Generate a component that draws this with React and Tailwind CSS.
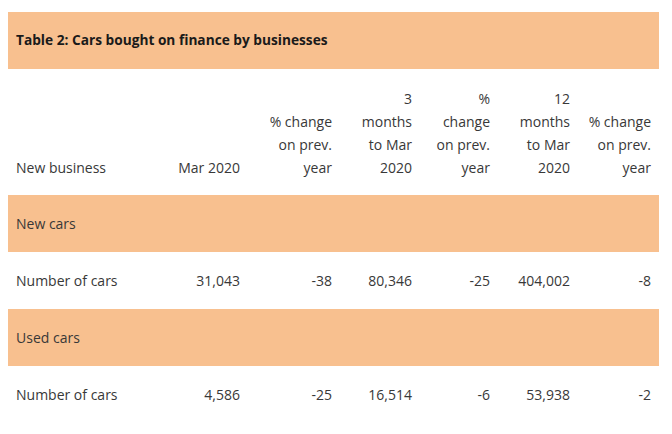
export default function App() {
  const cols = "grid grid-cols-[152px_88px_92px_80px_78px_80px_81px]";
  const cell = "pr-2 text-right";
  const rows = [
    { group: "New cars", values: ["31,043", "-38", "80,346", "-25", "404,002", "-8"] },
    { group: "Used cars", values: ["4,586", "-25", "16,514", "-6", "53,938", "-2"] },
  ];
  const headers = [
    ["Mar 2020"],
    ["% change", "on prev.", "year"],
    ["3", "months", "to Mar", "2020"],
    ["%", "change", "on prev.", "year"],
    ["12", "months", "to Mar", "2020"],
    ["% change", "on prev.", "year"],
  ];

  return (
    <div
      className="w-[672px] h-[434px] bg-white pt-3 pl-2 text-[#383838] text-[14px]"
      style={{ fontFamily: '"Open Sans", "Liberation Sans", sans-serif' }}
    >
      <div className="w-[651px]">
        <div className="h-[57px] bg-[#f8c08f] flex items-center pl-2 font-bold text-[13.7px] text-[#1a1a1a]">
          Table 2: Cars bought on finance by businesses
        </div>

        <div className={`${cols} h-[126px] items-end pb-[16px] leading-[23px]`}>
          <div className="pl-2">New business</div>
          {headers.map((lines, i) => (
            <div key={i} className={cell}>
              {lines.map((l, j) => (
                <div key={j}>{l}</div>
              ))}
            </div>
          ))}
        </div>

        {rows.map((r) => (
          <div key={r.group}>
            <div className="h-[57px] bg-[#f8c08f] flex items-center pl-2">{r.group}</div>
            <div className={`${cols} h-[57px] items-center`}>
              <div className="pl-2">Number of cars</div>
              {r.values.map((v, i) => (
                <div key={i} className={cell}>
                  {v}
                </div>
              ))}
            </div>
          </div>
        ))}
      </div>
    </div>
  );
}
